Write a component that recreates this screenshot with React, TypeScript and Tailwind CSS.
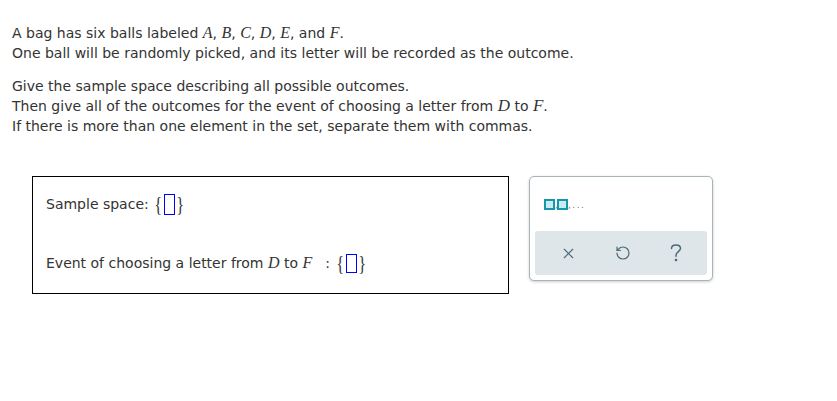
import { X, RotateCcw } from 'lucide-react';

function M({ children, big = false }: { children: string; big?: boolean }) {
  return (
    <span
      className={`font-['Liberation_Serif','DejaVu_Serif',serif] italic leading-none ${big ? 'text-[17px]' : 'text-[16px]'}`}
    >
      {children}
    </span>
  );
}

function Slot({ tall = false }: { tall?: boolean }) {
  return (
    <span className="inline-flex items-center align-middle text-[#333]">
      <span className="font-['Liberation_Serif',serif] text-[22px] leading-none scale-x-75">{'{'}</span>
      <span className={`inline-block w-[11px] ${tall ? 'h-[21px]' : 'h-[19px]'} border border-[#0000ff] bg-white`} />
      <span className="font-['Liberation_Serif',serif] text-[22px] leading-none scale-x-75">{'}'}</span>
    </span>
  );
}

function Question() {
  return (
    <svg width="12" height="18" viewBox="0 0 12 18" fill="none" stroke="currentColor" strokeWidth="1.5" strokeLinecap="round">
      <path d="M1.5 4.5 C1.5 2.3 3.4 1 6 1 C8.6 1 10.5 2.5 10.5 4.6 C10.5 7.4 6 8 6 11.3 V12.2" />
      <circle cx="6" cy="16" r="0.6" fill="currentColor" />
    </svg>
  );
}

export default function App() {
  return (
    <div className="w-[837px] h-[401px] bg-white text-[#333] font-['DejaVu_Sans','Verdana',sans-serif] text-[14px]">
      <div className="pl-3 pt-[23px] leading-[20px]">
        <p>
          A bag has six balls labeled <M>A</M>, <M>B</M>, <M>C</M>, <M>D</M>, <M>E</M>, and <M>F</M>.
        </p>
        <p>One ball will be randomly picked, and its letter will be recorded as the outcome.</p>
        <div className="h-[13px]" />
        <p>Give the sample space describing all possible outcomes.</p>
        <p>
          Then give all of the outcomes for the event of choosing a letter from <M big>D</M> to <M big>F</M>.
        </p>
        <p>If there is more than one element in the set, separate them with commas.</p>
      </div>

      <div className="flex items-start gap-[20px] pl-8 mt-[40px]">
        <div className="w-[477px] h-[118px] border border-black flex flex-col pl-[13px] pt-[15px]">
          <div className="flex items-center h-[24px]">
            <span>Sample space:&nbsp;</span>
            <Slot tall />
          </div>
          <div className="flex items-center h-[24px] mt-[35px]">
            <span>
              Event of choosing a letter from <M>D</M> to <M>F</M>
            </span>
            <span className="ml-[13px] mr-[5px]">:</span>
            <Slot />
          </div>
        </div>

        <div className="w-[184px] h-[105px] rounded-[5px] border border-[#a9b4b9] shadow-[0_1px_3px_rgba(0,0,0,0.2)] bg-white flex flex-col p-[5px]">
          <div className="flex items-end h-[28px] pl-[9px]">
            <span className="w-[11px] h-[11px] border-2 border-[#1597ab] bg-[#c8ecf1]" />
            <span className="text-[#777] text-[9px] leading-none w-[2px]">,</span>
            <span className="w-[11px] h-[11px] border-2 border-[#1597ab] bg-[#c8ecf1]" />
            <span className="text-[#777] text-[9px] leading-none tracking-[1.5px]">,...</span>
          </div>
          <div className="mt-auto h-[44px] rounded-[3px] bg-[#dfe6e9] flex items-center justify-around px-[6px] text-[#4c6a78]">
            <X size={17} strokeWidth={1.6} />
            <RotateCcw size={16} strokeWidth={1.8} />
            <Question />
          </div>
        </div>
      </div>
    </div>
  );
}
